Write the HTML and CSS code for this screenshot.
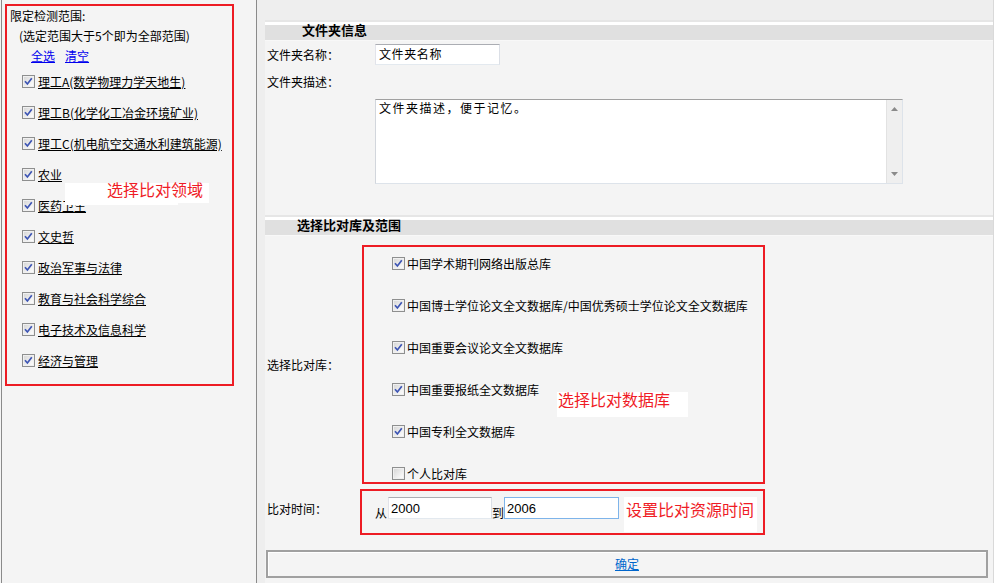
FILE: index.html
```html
<!DOCTYPE html>
<html lang="zh-CN">
<head>
<meta charset="utf-8">
<title>文件夹信息</title>
<link rel="stylesheet" href="styles.css">
</head>
<body>
<div class="page">
  <aside class="side">
    <div class="scope">
      <div class="line">限定检测范围:</div>
      <div class="line sub">(选定范围大于5个即为全部范围)</div>
      <div class="line links"><a href="#">全选</a><a href="#">清空</a></div>
      <ul class="areas">
        <li><span class="cb"><svg viewBox="0 0 11 11"><path d="M2 5.2 L4.4 8 L8.8 2.2" /></svg></span><a href="#" class="area">理工A(数学物理力学天地生)</a></li>
        <li><span class="cb"><svg viewBox="0 0 11 11"><path d="M2 5.2 L4.4 8 L8.8 2.2" /></svg></span><a href="#" class="area">理工B(化学化工冶金环境矿业)</a></li>
        <li><span class="cb"><svg viewBox="0 0 11 11"><path d="M2 5.2 L4.4 8 L8.8 2.2" /></svg></span><a href="#" class="area">理工C(机电航空交通水利建筑能源)</a></li>
        <li><span class="cb"><svg viewBox="0 0 11 11"><path d="M2 5.2 L4.4 8 L8.8 2.2" /></svg></span><a href="#" class="area">农业</a></li>
        <li><span class="cb"><svg viewBox="0 0 11 11"><path d="M2 5.2 L4.4 8 L8.8 2.2" /></svg></span><a href="#" class="area">医药卫生</a></li>
        <li><span class="cb"><svg viewBox="0 0 11 11"><path d="M2 5.2 L4.4 8 L8.8 2.2" /></svg></span><a href="#" class="area">文史哲</a></li>
        <li><span class="cb"><svg viewBox="0 0 11 11"><path d="M2 5.2 L4.4 8 L8.8 2.2" /></svg></span><a href="#" class="area">政治军事与法律</a></li>
        <li><span class="cb"><svg viewBox="0 0 11 11"><path d="M2 5.2 L4.4 8 L8.8 2.2" /></svg></span><a href="#" class="area">教育与社会科学综合</a></li>
        <li><span class="cb"><svg viewBox="0 0 11 11"><path d="M2 5.2 L4.4 8 L8.8 2.2" /></svg></span><a href="#" class="area">电子技术及信息科学</a></li>
        <li><span class="cb"><svg viewBox="0 0 11 11"><path d="M2 5.2 L4.4 8 L8.8 2.2" /></svg></span><a href="#" class="area">经济与管理</a></li>
      </ul>
      <div class="note note-area">选择比对领域</div>
    </div>
  </aside>
  <div class="strip"></div>
  <main class="main">
    <div class="bar bar-info">文件夹信息</div>
    <div class="row row-name">
      <div class="lbl lbl-name">文件夹名称：</div>
      <div class="txt txt-name">文件夹名称</div>
    </div>
    <div class="row row-desc">
      <div class="lbl">文件夹描述：</div>
    </div>
    <div class="textarea">
      <div class="ta-text">文件夹描述，便于记忆。</div>
      <div class="ta-scroll">
        <svg class="arrow" viewBox="0 0 7 4"><path d="M0 4 L3.5 0 L7 4 Z" /></svg>
        <svg class="arrow" viewBox="0 0 7 4"><path d="M0 0 L7 0 L3.5 4 Z" /></svg>
      </div>
    </div>
    <div class="bar bar-db">选择比对库及范围</div>
    <div class="row row-db">
      <div class="lbl lbl-db">选择比对库：</div>
      <div class="db">
        <ul class="dblist">
          <li><span class="cb"><svg viewBox="0 0 11 11"><path d="M2 5.2 L4.4 8 L8.8 2.2" /></svg></span>中国学术期刊网络出版总库</li>
          <li><span class="cb"><svg viewBox="0 0 11 11"><path d="M2 5.2 L4.4 8 L8.8 2.2" /></svg></span>中国博士学位论文全文数据库/中国优秀硕士学位论文全文数据库</li>
          <li><span class="cb"><svg viewBox="0 0 11 11"><path d="M2 5.2 L4.4 8 L8.8 2.2" /></svg></span>中国重要会议论文全文数据库</li>
          <li><span class="cb"><svg viewBox="0 0 11 11"><path d="M2 5.2 L4.4 8 L8.8 2.2" /></svg></span>中国重要报纸全文数据库</li>
          <li><span class="cb"><svg viewBox="0 0 11 11"><path d="M2 5.2 L4.4 8 L8.8 2.2" /></svg></span>中国专利全文数据库</li>
          <li><span class="cb off"></span>个人比对库</li>
        </ul>
        <div class="note note-db">选择比对数据库</div>
      </div>
    </div>
    <div class="row row-time">
      <div class="lbl lbl-time">比对时间：</div>
      <div class="timebox">
        <span class="tch tch-from">从</span>
        <div class="yr yr-from">2000</div>
        <span class="tch tch-to">到</span>
        <div class="yr yr-to">2006</div>
        <div class="note note-time">设置比对资源时间</div>
      </div>
    </div>
    <div class="btnbar"><a href="#">确定</a></div>
  </main>
</div>
</body>
</html>
```
FILE: styles.css
```css
* { box-sizing: border-box; }
html, body { margin: 0; padding: 0; }
body {
  width: 994px;
  height: 583px;
  overflow: hidden;
  background: #f4f4f4;
  font-family: "Noto Sans CJK SC", "Liberation Sans", sans-serif;
  font-size: 12px;
  color: #000;
}
ul { list-style: none; margin: 0; padding: 0; }

.page { display: flex; height: 583px; padding-left: 1px; }

/* left pane */
.side {
  width: 256px;
  flex: none;
  border-left: 1px solid #8a8a8a;
  border-right: 1px solid #8a8a8a;
  background: #f4f4f4;
  padding: 4px 0 0 3px;
}
.scope {
  position: relative;
  width: 229px;
  height: 382px;
  border: 2px solid #ed1c24;
  padding: 0 0 0 3px;
}
.line { height: 20px; line-height: 20px; white-space: nowrap; }
.sub { padding-left: 9px; }
.links { padding-left: 21px; }
.links a { color: #0000ee; text-decoration: underline; margin-right: 10px; }
.areas { padding-left: 12px; }
.areas li { height: 31px; display: flex; align-items: center; gap: 3px; white-space: nowrap; }
.area { color: #000; text-decoration: underline; }

/* checkbox */
.cb {
  width: 13px;
  height: 13px;
  flex: none;
  border: 1px solid #8e8f8f;
  background: linear-gradient(135deg, #d4d4d4 0%, #f4f4f4 70%, #ffffff 100%);
  box-shadow: inset 0 0 0 1px #f0f0f0;
  display: flex;
}
.cb svg { width: 11px; height: 11px; }
.cb path { fill: none; stroke: #3d55b4; stroke-width: 1.7; }

/* annotations */
.note {
  background: #fff;
  color: #ef1c26;
  font-size: 16px;
  white-space: nowrap;
}
.note-area {
  position: absolute;
  left: 58px;
  top: 177px;
  width: 144px;
  height: 20px;
  padding-left: 42px;
  line-height: 13px;
}
.note-area::after {
  content: "";
  position: absolute;
  left: 0;
  top: 20px;
  width: 113px;
  height: 2px;
  background: #fff;
}

.strip { width: 8px; flex: none; background: #eeeeee; }

/* right pane */
.main {
  width: 729px;
  flex: none;
  padding-top: 20px;
  background: linear-gradient(#eeeeee 0 20px, #f4f4f4 20px);
  border-right: 1px solid #d9d9d9;
}
.bar {
  height: 21px;
  border-top: 2px solid #e6e6e6;
  border-bottom: 1px solid #f8f8f8;
  box-shadow: inset 0 3px 0 #ffffff;
  background: #e0e0e0;
  font-weight: bold;
  font-size: 13px;
  line-height: 16px;
  padding-top: 0;
  white-space: nowrap;
}
.bar-info { padding-left: 37px; }
.bar-db { padding-left: 32px; margin-top: 31px; }

.row { display: flex; align-items: center; padding-left: 2px; }
.lbl { flex: none; white-space: nowrap; }
.row-name { height: 27px; }
.lbl-name { width: 108px; }
.row-desc { height: 27px; }

.txt {
  width: 125px;
  height: 21px;
  background: #fff;
  border: 1px solid;
  border-color: #abadb3 #dbdfe6 #e3e9ef #e2e3ea;
  padding-left: 3px;
  line-height: 18px;
  letter-spacing: 0.6px;
  white-space: nowrap;
}

.textarea {
  display: flex;
  margin: 4px 0 0 110px;
  width: 528px;
  height: 85px;
  background: #fff;
  border: 1px solid;
  border-color: #a0a0a0 #dde3ea #dde3ea #d2d6dc;
}
.ta-text {
  flex: 1;
  padding: 0 0 0 3px;
  line-height: 16px;
  letter-spacing: 1.5px;
}
.ta-scroll {
  width: 16px;
  flex: none;
  background: #efefef;
  border-left: 1px solid #e2e2e2;
  display: flex;
  flex-direction: column;
  justify-content: space-between;
  align-items: center;
  padding: 7px 0 7px;
}
.arrow { width: 7px; height: 4px; }
.arrow path { fill: #8a8a8a; }

.row-db { margin-top: 9px; }
.lbl-db { width: 95px; }
.db {
  position: relative;
  width: 403px;
  border: 2px solid #ed1c24;
  padding: 7px 0 0 28px;
}
.dblist li {
  height: 18px;
  margin-bottom: 24px;
  display: flex;
  align-items: center;
  gap: 2px;
  white-space: nowrap;
}
.dblist li:last-child { margin-bottom: 0; }
.note-db {
  position: absolute;
  left: 193px;
  top: 145px;
  width: 131px;
  height: 25px;
  padding-left: 1px;
  line-height: 15px;
}

.row-time { margin-top: 5px; align-items: flex-start; }
.lbl-time { width: 93px; margin-top: 12px; line-height: 16px; }
.timebox {
  display: flex;
  align-items: flex-start;
  width: 405px;
  height: 46px;
  border: 2px solid #ed1c24;
  padding: 6px 0 0 13px;
}
.tch { margin-top: 8px; line-height: 16px; flex: none; }
.tch-from { margin-right: 1px; }
.yr {
  height: 22px;
  background: #fff;
  border: 1px solid;
  border-color: #abadb3 #dbdfe6 #e3e9ef #e2e3ea;
  padding-left: 2px;
  font-family: "Liberation Sans", sans-serif;
  font-size: 13px;
  line-height: 21px;
}
.yr-from { width: 104px; }
.yr-to { width: 115px; border-color: #7eb4ea; }
.note-time {
  margin-left: 5px;
  width: 133px;
  height: 35px;
  padding-left: 2px;
  line-height: 24px;
}

.btnbar {
  margin: 15px 0 0 1px;
  width: 722px;
  height: 28px;
  border: 2px solid #a0a0a0;
  box-shadow: inset 1px 1px 0 #ffffff;
  text-align: center;
  line-height: 23px;
}
.btnbar a { color: #0066cc; text-decoration: underline; }
```
